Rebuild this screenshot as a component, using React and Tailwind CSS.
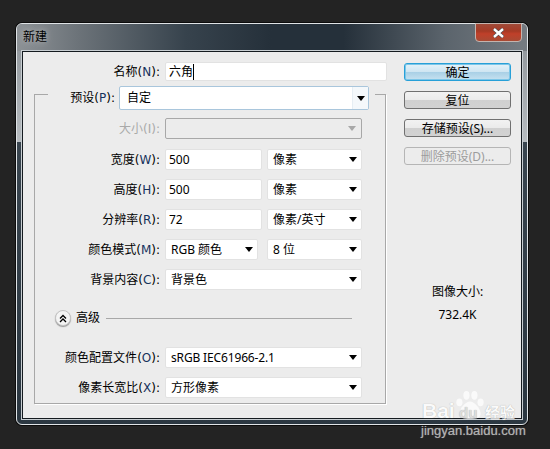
import React from "react";

const font = "font-['Noto_Sans','Noto_Sans_CJK_SC',sans-serif] text-[12px] leading-none text-black";
const labelFont = "font-['DejaVu_Sans','Noto_Sans_CJK_SC',sans-serif]";

function Caret({ muted }) {
  return (
    <svg width="8" height="5" viewBox="0 0 8 5" className="shrink-0">
      <path d="M0 0h8L4 5z" fill={muted ? "#a8a8a8" : "#000"} />
    </svg>
  );
}

function Label({ children, hotkey, disabled, className }) {
  return (
    <div className={`shrink-0 text-right whitespace-nowrap ${labelFont} ${disabled ? "text-[#a9a9a9]" : "text-black"} ${className}`}>
      {children}(<span className={disabled ? "" : "text-[#16325c]"}>{hotkey}</span>):
    </div>
  );
}

function Field({ value, className }) {
  return (
    <div className={`h-[21px] bg-white rounded-[2px] border border-[#e2e2e2] flex items-center pl-[3px] text-[12px] ${className}`}>
      {value}
    </div>
  );
}

function Select({ value, className }) {
  return (
    <div className={`h-[21px] bg-white rounded-[2px] border border-[#e2e2e2] flex items-center justify-between pl-[5px] pr-[4px] text-[12px] whitespace-nowrap ${className}`}>
      <span>{value}</span>
      <Caret />
    </div>
  );
}

function Row({ label, hotkey, disabled, children, className }) {
  return (
    <div className={`flex items-center ${className}`}>
      <Label hotkey={hotkey} disabled={disabled} className="w-[125px] mr-[5px]">{label}</Label>
      {children}
    </div>
  );
}

function Btn({ children, primary, disabled }) {
  let cls = "border-[#707070] bg-[linear-gradient(#f2f2f2_0%,#ebebeb_48%,#d0d0d0_52%,#d2d2d2_100%)] text-black";
  if (primary) cls = "border-[#27a0d8] shadow-[inset_0_0_0_1px_#7cc6e8] bg-[linear-gradient(#e4f2f9_0%,#cfe6f2_48%,#a9d0e6_52%,#c7e2f0_100%)] text-black";
  if (disabled) cls = "border-[#b5b5b5] bg-[#ececec] text-[#9c9c9c]";
  return (
    <div className={`w-[107px] h-[18px] rounded-[3px] border flex items-center justify-center text-[12px] pt-px ${cls}`}>
      {children}
    </div>
  );
}

export default function App() {
  return (
    <div className={`relative w-[550px] h-[449px] bg-[#232323] pt-[23px] pl-[16px] overflow-hidden ${font}`}>
      <div className="w-[512px] h-[402px] rounded-[6px] border border-[#dfe3e6] flex flex-col bg-[linear-gradient(#8a9095_0%,#b7bcc0_29.5%,#39454f_29.6%,#2b3741_100%)] shadow-[0_0_0_1px_#0c0c0c]">
        <div className="h-[27px] shrink-0 flex justify-between pl-[6px] pr-[5px] rounded-t-[5px] bg-[linear-gradient(90deg,#8d9296_0%,#6c7379_12%,#37434d_33%,#25303a_50%,#25303a_64%,#5b646c_84%,#767c82_100%)]">
          <div className="pt-[7px] text-[12px] text-black [text-shadow:0_0_6px_#c8c8c8]">新建</div>
          <div className="w-[47px] h-[19px] -mt-px rounded-b-[4px] border border-[#c4b4ae] bg-[linear-gradient(#a04a38_0%,#a63a25_42%,#c0402a_58%,#a84a34_100%)] flex items-center justify-center">
            <svg width="13" height="10" viewBox="0 0 13 10">
              <path d="M2 1l9 8M11 1l-9 8" stroke="#3d4a55" strokeWidth="3.6" />
              <path d="M2 1l9 8M11 1l-9 8" stroke="#fff" strokeWidth="2.4" />
            </svg>
          </div>
        </div>

        <div className="mx-[5px] h-[368px] bg-[#ececec] border border-[#151b20] outline outline-[#c8ced2] flex">
          <div className="w-[364px] shrink-0">
            <div className="flex items-center pt-[10px]">
              <div className={`w-[137px] text-right mr-[5px] ${labelFont}`}>名称(<span className="text-[#16325c]">N</span>):</div>
              <div className="w-[222px] h-[19px] bg-white rounded-[2px] border border-[#e2e2e2] flex items-center pl-[3px]">
                六角<span className="w-px h-[16px] bg-black" />
              </div>
            </div>

            <div className="ml-[11px] mt-[13px] w-[352px] h-[310px] border border-[#a8a8a8] shadow-[1px_1px_0_#fff]">
              <div className="-mt-[9px] ml-[13px] w-[327px] h-[24px] bg-[#ececec] flex items-center">
                <div className={`w-[67px] text-right mr-[4px] whitespace-nowrap ${labelFont}`}>预设(<span className="text-[#16325c]">P</span>):</div>
                <div className="w-[250px] h-[24px] bg-white border border-[#a9c6dc] rounded-[2px] flex items-center justify-between pl-[7px] pr-[3px]">
                  <span>自定</span>
                  <div className="w-[16px] h-full bg-[#f4f8fb] border-l border-[#e6eef4] flex items-center justify-center -mr-[3px]">
                    <Caret />
                  </div>
                </div>
              </div>

              <Row label="大小" hotkey="I" disabled className="mt-[8px]">
                <div className="w-[197px] h-[21px] border border-[#a8a8a8] rounded-[2px] flex items-center justify-end bg-[#ececec] pr-[5px]">
                  <Caret muted />
                </div>
              </Row>
              <Row label="宽度" hotkey="W" className="mt-[10px]">
                <Field value="500" className="w-[97px]" />
                <Select value="像素" className="w-[95px] ml-[5px]" />
              </Row>
              <Row label="高度" hotkey="H" className="mt-[9px]">
                <Field value="500" className="w-[97px]" />
                <Select value="像素" className="w-[95px] ml-[5px]" />
              </Row>
              <Row label="分辨率" hotkey="R" className="mt-[9px]">
                <Field value="72" className="w-[97px]" />
                <Select value="像素/英寸" className="w-[95px] ml-[5px]" />
              </Row>
              <Row label="颜色模式" hotkey="M" className="mt-[9px]">
                <Select value="RGB 颜色" className="w-[93px]" />
                <Select value="8 位" className="w-[95px] ml-[9px]" />
              </Row>
              <Row label="背景内容" hotkey="C" className="mt-[9px]">
                <Select value="背景色" className="w-[197px]" />
              </Row>

              <div className="flex items-center ml-[20px] mt-[20px]">
                <div className="w-[16px] h-[16px] rounded-full border border-[#c4c4c4] bg-[#f4f4f4] shadow-[0_1px_1px_#999] flex items-center justify-center">
                  <svg width="8" height="9" viewBox="0 0 8 9" fill="none" stroke="#000" strokeWidth="1.3">
                    <path d="M1 4.5L4 1.5l3 3M1 8L4 5l3 3" />
                  </svg>
                </div>
                <span className="ml-[5px]">高级</span>
                <div className="ml-[6px] w-[246px] h-px bg-[#a8a8a8]" />
              </div>

              <Row label="颜色配置文件" hotkey="O" className="mt-[21px]">
                <Select value={<span className="tracking-[-0.15px]">sRGB IEC61966-2.1</span>} className="w-[197px]" />
              </Row>
              <Row label="像素长宽比" hotkey="X" className="mt-[9px]">
                <Select value="方形像素" className="w-[197px]" />
              </Row>
            </div>
          </div>

          <div className="ml-[17px] pt-[11px] flex flex-col gap-[10px] relative">
            <Btn primary>确定</Btn>
            <Btn>复位</Btn>
            <Btn>存储预设(S)...</Btn>
            <Btn disabled>删除预设(D)...</Btn>
            <div className="mt-[105px] text-center leading-[23px]">
              <div>图像大小:</div>
              <div>732.4K</div>
            </div>
          </div>
        </div>
      </div>

      <div className="absolute left-[421px] top-[390px] w-[125px] text-white opacity-75 font-['Liberation_Sans','Noto_Sans_CJK_SC',sans-serif] [text-shadow:0_0_1px_#8a8a8a]">
        <div className="relative h-[34px]">
          <svg width="30" height="30" viewBox="0 0 34 34" className="absolute left-[34px] top-0" fill="#fff">
            <ellipse cx="5" cy="14" rx="3.5" ry="4.5" />
            <ellipse cx="13" cy="6" rx="3.5" ry="5" />
            <ellipse cx="22" cy="6" rx="3.5" ry="5" />
            <ellipse cx="29" cy="14" rx="3.5" ry="4.5" />
            <path d="M17 13c-5 0-12 8-12 14 0 5 5 6 12 6s12-1 12-6c0-6-7-14-12-14z" />
          </svg>
          <div className="absolute left-[1px] top-[10px] text-[21px] font-bold whitespace-nowrap">Bai</div>
          <div className="absolute left-[38px] top-[15px] text-[15px] font-bold text-[#d8d8d8] whitespace-nowrap">du</div>
          <div className="absolute left-[64px] top-[15px] text-[15px] font-bold whitespace-nowrap">经验</div>
        </div>
        <div className="text-[13px] whitespace-nowrap text-[#e4e4e4]">jingyan.baidu.com</div>
      </div>
    </div>
  );
}
